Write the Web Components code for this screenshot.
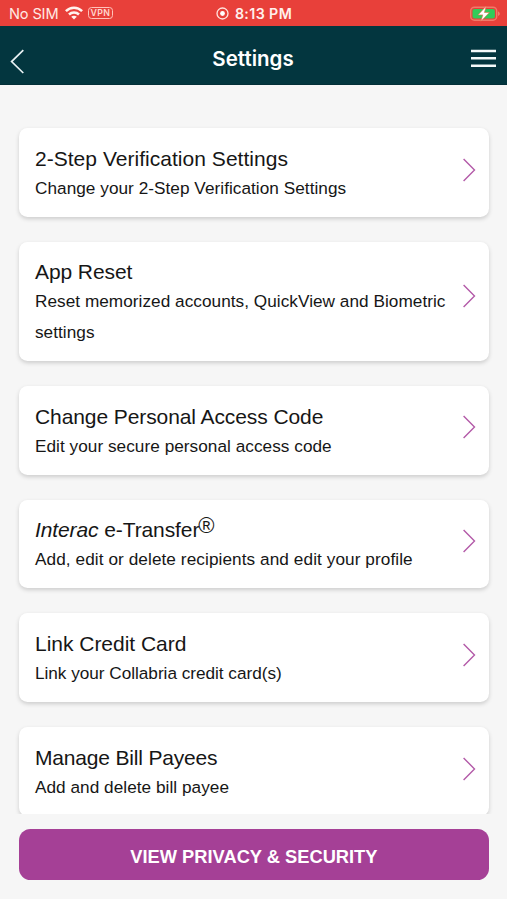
<!DOCTYPE html>
<html lang="en">
<head>
<meta charset="utf-8">
<title>Settings</title>
<style>
  html, body { margin: 0; height: 100%; overflow: hidden; }
  body { font-family: "Liberation Sans", Arial, sans-serif; color: #161616; background: #fff; }
</style>
</head>
<body>
<settings-screen></settings-screen>
<script>
const define = (name, html) => {
  const t = document.createElement('template');
  t.innerHTML = html;
  customElements.define(name, class extends HTMLElement {
    constructor() {
      super();
      this.attachShadow({ mode: 'open' }).append(t.content.cloneNode(true));
    }
  });
};

define('status-bar', `
<style>
  :host { display: grid; grid-template-columns: 1fr auto 1fr; align-items: center; height: 25.5px; box-sizing: border-box;
    padding: 2px 7px 0 9px; background: #e8403a; color: #ffe9e4; font-family: Inter, sans-serif; font-size: 14.6px; line-height: 22px; }
  div { display: flex; align-items: center; }
  .sim { letter-spacing: -.15px; }
  .wifi { margin-left: 6.5px; margin-top: -1px; }
  .vpn { margin-left: 5px; margin-top: -1px; box-sizing: border-box; width: 25px; height: 12px; border: 1.2px solid #ffc2ba; border-radius: 3.5px; color: #ffd5ce;
    font-size: 8.8px; line-height: 10px; text-align: center; font-weight: 600; letter-spacing: .3px; }
  .time { font-weight: 600; font-size: 14.2px; letter-spacing: .4px; gap: 6px; color: #fff0ec; margin-left: -1px; }
  .end { justify-content: flex-end; }
  svg { display: block; }
</style>
<div>
  <span class="sim">No SIM</span>
  <svg class="wifi" width="18" height="14" viewBox="0 0 18 14">
    <g fill="none" stroke="#fff3ee" stroke-width="2.5"><path d="M.9 5.1C5.4.5 12.6.5 17.1 5.1"/><path d="M4 8.5c2.8-2.7 7.2-2.7 10 0"/></g>
    <path d="M6.2 10.7c1.6-1.4 4-1.4 5.6 0L9 13.5z" fill="#fff3ee"/>
  </svg>
  <span class="vpn">VPN</span>
</div>
<div class="time">
  <svg width="13" height="13" viewBox="0 0 13 13"><circle cx="6.5" cy="6.5" r="5.5" fill="none" stroke="#ffe4df" stroke-width="1.3"/><circle cx="6.5" cy="6.5" r="2.4" fill="#fff"/></svg>
  <span>8:13 PM</span>
</div>
<div class="end">
  <svg width="30" height="16" viewBox="0 0 30 16">
    <rect x=".7" y="1.2" width="26" height="13" rx="3.7" fill="none" stroke="#f07a6a" stroke-width="1.4"/>
    <rect x="2.5" y="3" width="22.4" height="9.5" rx="2" fill="#30cc59"/>
    <path d="M28.2 5.5c1.9.7 1.9 3.7 0 4.4z" fill="#f58b7c"/>
    <path d="M16.2.2 8 8.9h4.8l-1.9 6.4 8.5-8.8h-5z" fill="#fff" stroke="#e76b47" stroke-width=".6"/>
  </svg>
</div>`);

define('nav-header', `
<style>
  :host { display: grid; grid-template-columns: 1fr auto 1fr; height: 59px; box-sizing: border-box; align-items: start;
    padding: 0 11px 0 10px; background: #03363f; color: #fff; border-bottom: 1px solid #032f38; }
  h1 { margin: 20px 0 0; font: 600 20.5px/26px Inter, sans-serif; }
  svg { display: block; }
  .back { margin-top: 23.5px; }
  .menu { justify-self: end; margin-top: 23.5px; }
</style>
<svg class="back" width="15" height="26" viewBox="0 0 15 26"><path d="M13.3 1.2 1.6 12.6 13.3 24" fill="none" stroke="#e8f1f3" stroke-width="1.7"/></svg>
<h1><slot></slot></h1>
<svg class="menu" width="25" height="19" viewBox="0 0 25 19"><path d="M0 2h25M0 9.3h25M0 16.8h25" stroke="#f4fafa" stroke-width="2.4"/></svg>`);

define('setting-card', `
<style>
  :host { display: flex; min-height: 88.7px; box-sizing: border-box; padding: 15.6px 12.6px 13.7px 15.8px; background: #fff;
    border-radius: 8.5px; box-shadow: 0 2px 4px rgba(0,0,0,.17); }
  .body { flex: 1; min-width: 0; }
  h2 { margin: 0; font-weight: 400; font-size: 21px; line-height: 29px; white-space: nowrap; letter-spacing: var(--title-spacing, -.09px); }
  p { margin: 0; font-size: 17.2px; line-height: 30.4px; letter-spacing: var(--text-spacing, .04px); }
  svg { display: block; flex: none; margin-top: var(--chevron-top, 13.9px); }
</style>
<div class="body"><h2><slot name="title"></slot></h2><p><slot></slot></p></div>
<svg width="13" height="24" viewBox="0 0 13 24"><path d="M.6.9 11.5 12 .6 23.1" fill="none" stroke="#b35aa8" stroke-width="1.4"/></svg>`);

define('primary-button', `
<style>
  :host { display: block; }
  button { display: block; width: 100%; height: 51px; margin: 0; padding: 5px 0 0; border: 0; border-radius: 11.5px; background: #a54096; color: #fff;
    font: 700 18.3px/46px "Liberation Sans", Arial, sans-serif; }
</style>
<button><slot></slot></button>`);

define('settings-screen', `
<style>
  :host { display: flex; flex-direction: column; height: 898.5px; background: #f6f6f6; }
  main { flex: 1; min-height: 0; overflow: hidden; display: flex; flex-direction: column; gap: 25px; padding: 43.7px 18.4px 0 19.2px; }
  setting-card { flex: none; }
  .verify { --title-spacing: .03px; }
  .reset { --chevron-top: 26.4px; }
  .transfer { --text-spacing: .08px; --title-spacing: -.1px; }
  .link { --text-spacing: -.02px; --title-spacing: -.02px; }
  .payees { --title-spacing: -.18px; }
  sup { font-size: 22px; line-height: 0; vertical-align: 4.5px; margin-left: -1px; }
  footer { flex: none; height: 84.5px; box-sizing: border-box; padding: 15px 18.4px 0 19.2px; }
</style>
<status-bar></status-bar>
<nav-header>Settings</nav-header>
<main>
  <setting-card class="verify"><span slot="title">2-Step Verification Settings</span>Change your 2-Step Verification Settings</setting-card>
  <setting-card class="reset"><span slot="title">App Reset</span>Reset memorized accounts, QuickView and Biometric settings</setting-card>
  <setting-card><span slot="title">Change Personal Access Code</span>Edit your secure personal access code</setting-card>
  <setting-card class="transfer"><span slot="title"><i>Interac</i> e-Transfer<sup>®</sup></span>Add, edit or delete recipients and edit your profile</setting-card>
  <setting-card class="link"><span slot="title">Link Credit Card</span>Link your Collabria credit card(s)</setting-card>
  <setting-card class="payees"><span slot="title">Manage Bill Payees</span>Add and delete bill payee</setting-card>
</main>
<footer><primary-button>VIEW PRIVACY &amp; SECURITY</primary-button></footer>`);
</script>
</body>
</html>
